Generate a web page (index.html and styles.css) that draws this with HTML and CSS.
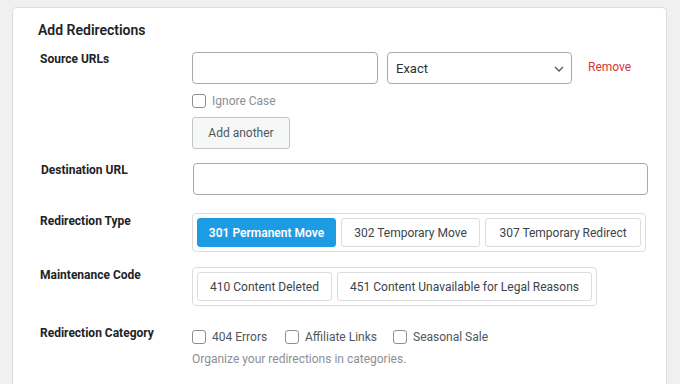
FILE: index.html
```html
<!DOCTYPE html>
<html>
<head>
<meta charset="utf-8">
<link rel="stylesheet" href="styles.css">
</head>
<body>
<div class="card">
  <h2 class="title">Add Redirections</h2>

  <div class="row row-source">
    <div class="label">Source URLs</div>
    <div class="field">
      <div class="source-line">
        <input class="input input-source" type="text">
        <div class="select">
          <span>Exact</span>
          <svg class="chev" width="10" height="6" viewBox="0 0 10 6"><path d="M1 1l4 4 4-4" fill="none" stroke="#50575e" stroke-width="1.3"/></svg>
        </div>
        <a class="remove">Remove</a>
      </div>
      <label class="check check-ignore"><span class="box"></span>Ignore Case</label>
      <button class="btn-secondary">Add another</button>
    </div>
  </div>

  <div class="row row-dest">
    <div class="label">Destination URL</div>
    <div class="field">
      <input class="input input-dest" type="text">
    </div>
  </div>

  <div class="row row-type">
    <div class="label">Redirection Type</div>
    <div class="field">
      <div class="group">
        <span class="opt active">301 Permanent Move</span>
        <span class="opt">302 Temporary Move</span>
        <span class="opt">307 Temporary Redirect</span>
      </div>
    </div>
  </div>

  <div class="row row-maint">
    <div class="label">Maintenance Code</div>
    <div class="field">
      <div class="group">
        <span class="opt">410 Content Deleted</span>
        <span class="opt">451 Content Unavailable for Legal Reasons</span>
      </div>
    </div>
  </div>

  <div class="row row-cat">
    <div class="label">Redirection Category</div>
    <div class="field">
      <div class="cats">
        <label class="check"><span class="box"></span>404 Errors</label>
        <label class="check"><span class="box"></span>Affiliate Links</label>
        <label class="check"><span class="box"></span>Seasonal Sale</label>
      </div>
      <p class="help">Organize your redirections in categories.</p>
    </div>
  </div>
</div>
</body>
</html>
```

FILE: styles.css
```css
* { box-sizing: border-box; }
html, body {
  margin: 0;
  padding: 0;
  background: #f0f0f1;
  font-family: Roboto, "Liberation Sans", Arial, sans-serif;
  color: #1d2327;
  overflow: hidden;
}
.card {
  margin: 7px 13px 0 12px;
  background: #fff;
  border: 1px solid #dcdcde;
  border-bottom: none;
  border-radius: 5px 5px 0 0;
  padding: 13px 0 30px 25px;
  height: 390px;
}
.title {
  margin: 0;
  font-size: 14px;
  font-weight: 600;
  line-height: 18px;
}
.row {
  display: flex;
}
.label {
  width: 154px;
  padding-left: 2px;
  font-size: 12px;
  font-weight: 700;
  line-height: 16px;
  flex: none;
}
.field { flex: 1; }

.row-source { margin-top: 13px; }
.row-source .label { margin-top: -1px; }
.source-line {
  display: flex;
  align-items: center;
}
.input {
  display: block;
  height: 32px;
  border: 1px solid #a7aaad;
  border-radius: 4px;
  background: #fff;
  padding: 0 8px;
  font: inherit;
}
.input-source { width: 186px; }
.select {
  margin-left: 9px;
  width: 185px;
  height: 32px;
  border: 1px solid #a7aaad;
  border-radius: 4px;
  display: flex;
  align-items: center;
  justify-content: space-between;
  padding: 0 7px 0 8px;
  font-size: 13px;
  color: #2c3338;
}
.chev { margin-top: 1px; }
.remove {
  margin-left: 16px;
  font-size: 12px;
  color: #d63638;
  margin-top: -2px;
}
.check {
  display: flex;
  align-items: center;
  font-size: 12px;
  color: #50575e;
  line-height: 14px;
  white-space: nowrap;
}
.box {
  width: 14px;
  height: 14px;
  border: 1px solid #8c8f94;
  border-radius: 3px;
  background: #fff;
  margin-right: 6px;
  flex: none;
}
.check-ignore {
  margin-top: 10px;
  color: #8c8f94;
}
.btn-secondary {
  display: block;
  margin-top: 9px;
  width: 98px;
  height: 32px;
  border: 1px solid #c3c4c7;
  border-radius: 3px;
  background: #f6f7f7;
  color: #50575e;
  font: inherit;
  font-size: 12px;
  padding: 0;
}

.row-dest { margin-top: 14px; }
.row-dest .label { padding-left: 3px; margin-top: -1px; }
.input-dest { width: 455px; margin-left: 1px; }

.row-type { margin-top: 18px; }
.group {
  display: inline-flex;
  gap: 5px;
  padding: 4px;
  border: 1px solid #dcdcde;
  border-radius: 4px;
}
.opt {
  height: 29px;
  display: flex;
  align-items: center;
  justify-content: center;
  padding: 0;
  white-space: nowrap;
  border: 1px solid #dcdcde;
  border-radius: 3px;
  font-size: 12px;
  color: #3c434a;
  background: #fff;
}
.opt.active {
  background: #1e9ce3;
  border-color: #1e9ce3;
  color: #fff;
  font-weight: 600;
}
.row-type .opt:nth-child(1) { width: 139px; }
.row-type .opt:nth-child(2) { width: 139px; }
.row-type .opt:nth-child(3) { width: 156px; }
.row-maint .opt:nth-child(1) { width: 135px; }
.row-maint .opt:nth-child(2) { width: 255px; }

.row-maint { margin-top: 15px; }

.row-cat { margin-top: 19px; }
.cats {
  display: flex;
  margin-top: 5px;
}
.cats .check:nth-child(1) { width: 93px; }
.cats .check:nth-child(2) { width: 108px; }
.help {
  margin: 8px 0 0;
  font-size: 12px;
  color: #8c8f94;
  line-height: 14px;
}
```
